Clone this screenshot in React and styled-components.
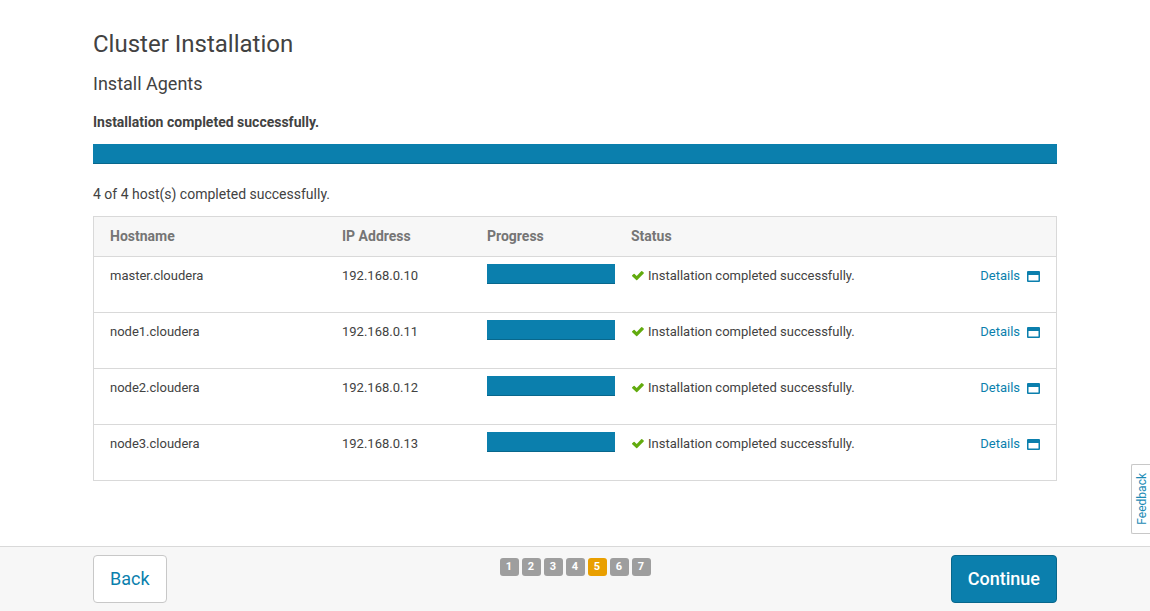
import React from "react";
import styled, { createGlobalStyle } from "styled-components";

const colors = {
  primary: "#0b7fad",
  primaryDark: "#08678c",
  text: "#424242",
  muted: "#757575",
  border: "#d9d9d9",
  panel: "#f7f7f7",
};

const GlobalStyle = createGlobalStyle`
  * { box-sizing: border-box; }
  body {
    margin: 0;
    background: #fff;
    color: ${colors.text};
    font: 14px/20px Roboto, "Liberation Sans", sans-serif;
  }
  button { font-family: inherit; cursor: pointer; }
`;

const Page = styled.div`
  display: flex;
  flex-direction: column;
  min-height: 100vh;
`;

const Main = styled.main`
  flex: 1;
  padding: 28px 93px 64px;
`;

const Title = styled.h1`
  margin: 0 0 12px;
  font-size: 24px;
  line-height: 32px;
  font-weight: 400;
`;

const Subtitle = styled.h2`
  margin: 0 0 16px;
  font-size: 18px;
  line-height: 24px;
  font-weight: 400;
`;

const Message = styled.p`
  margin: 0 0 12px;
  font-weight: ${(p) => (p.$strong ? 700 : 400)};
`;

const Bar = styled.div`
  height: 20px;
  width: 100%;
  background: ${colors.primary};
  box-shadow: inset 0 -1px 0 ${colors.primaryDark};
`;

const OverallBar = styled(Bar)`
  margin-bottom: 20px;
`;

const HostTable = styled.table`
  width: 100%;
  table-layout: fixed;
  border-spacing: 0;
  border: 1px solid ${colors.border};
  border-bottom: 0;
`;

const Col = styled.col`
  width: ${(p) => p.$width};
`;

const HeadCell = styled.th`
  height: 40px;
  padding: 0 0 2px 16px;
  text-align: left;
  font-weight: 700;
  color: ${colors.muted};
  background: ${colors.panel};
  border-bottom: 1px solid ${colors.border};
`;

const Cell = styled.td`
  height: 56px;
  padding: 7px 0 0 16px;
  vertical-align: top;
  font-size: 13px;
  line-height: 24px;
  border-bottom: 1px solid ${colors.border};
`;

const ActionCell = styled(Cell)`
  padding-right: 16px;
`;

const Status = styled.span`
  display: flex;
  align-items: center;
  gap: 4px;
`;

const DetailsLink = styled.a`
  display: flex;
  align-items: center;
  justify-content: flex-end;
  gap: 6px;
  color: ${colors.primary};
  text-decoration: none;
`;

const Footer = styled.footer`
  display: flex;
  align-items: flex-start;
  justify-content: space-between;
  padding: 8px 93px;
  background: ${colors.panel};
  border-top: 1px solid ${colors.border};
`;

const FooterSide = styled.div`
  flex: 1;
  display: flex;
  justify-content: ${(p) => (p.$end ? "flex-end" : "flex-start")};
`;

const Button = styled.button`
  height: 48px;
  padding: 0 16px;
  font-size: 18px;
  line-height: 24px;
  font-weight: ${(p) => (p.$primary ? 500 : 400)};
  color: ${(p) => (p.$primary ? "#fff" : colors.primary)};
  background: ${(p) => (p.$primary ? colors.primary : "#fff")};
  border: 1px solid ${(p) => (p.$primary ? colors.primaryDark : "#c8c8c8")};
  border-radius: 4px;
`;

const Steps = styled.ol`
  display: flex;
  gap: 3px;
  margin: 0;
  padding: 3px 0 0;
  list-style: none;
`;

const Step = styled.li`
  width: 19px;
  height: 18px;
  border-radius: 3px;
  text-align: center;
  font-size: 11px;
  line-height: 18px;
  font-weight: 700;
  color: #fff;
  background: ${(p) => (p.$active ? "#e99f00" : "#9e9e9e")};
`;

const Feedback = styled.button`
  position: fixed;
  right: 0;
  bottom: 77px;
  width: 19px;
  height: 70px;
  padding: 0 0 0 2px;
  display: flex;
  align-items: center;
  justify-content: center;
  writing-mode: vertical-rl;
  font-size: 12px;
  line-height: 16px;
  color: #1c8bb5;
  background: #fff;
  border: 1px solid #c8c8c8;
  border-right: 0;
  border-radius: 2px 0 0 2px;

  span { transform: rotate(180deg); }
`;

const CheckIcon = () => (
  <svg width="13" height="12" viewBox="0 0 13 12" aria-hidden="true">
    <path
      fill="#62ab0e"
      d="M1.2 5.3 2.6 3.9q.5-.4 1 0l2.1 2L10.2 1.2q.5-.4 1 0l1.5 1.4q.4.4 0 .9L6.2 10q-.5.5-1 0L1.2 6.2q-.4-.4 0-.9Z"
    />
  </svg>
);

const WindowIcon = () => (
  <svg width="14" height="12" viewBox="0 0 14 12" aria-hidden="true">
    <path
      fill={colors.primary}
      fillRule="evenodd"
      d="M2 1h11q1 0 1 1v9q0 1-1 1H2q-1 0-1-1V2q0-1 1-1ZM2.5 5v5.5h10V5Z"
    />
  </svg>
);

const hosts = [
  { name: "master.cloudera", ip: "192.168.0.10" },
  { name: "node1.cloudera", ip: "192.168.0.11" },
  { name: "node2.cloudera", ip: "192.168.0.12" },
  { name: "node3.cloudera", ip: "192.168.0.13" },
];

const steps = [1, 2, 3, 4, 5, 6, 7];

export default function App() {
  return (
    <Page>
      <GlobalStyle />
      <Main>
        <Title>Cluster Installation</Title>
        <Subtitle>Install Agents</Subtitle>
        <Message $strong>Installation completed successfully.</Message>
        <OverallBar role="progressbar" aria-label="Overall progress" aria-valuenow={100} />
        <Message>4 of 4 host(s) completed successfully.</Message>
        <HostTable>
          <colgroup>
            <Col $width="232px" />
            <Col $width="145px" />
            <Col $width="144px" />
            <Col $width="auto" />
            <Col $width="96px" />
          </colgroup>
          <thead>
            <tr>
              <HeadCell scope="col">Hostname</HeadCell>
              <HeadCell scope="col">IP Address</HeadCell>
              <HeadCell scope="col">Progress</HeadCell>
              <HeadCell scope="col" colSpan={2}>Status</HeadCell>
            </tr>
          </thead>
          <tbody>
            {hosts.map((host) => (
              <tr key={host.name}>
                <Cell>{host.name}</Cell>
                <Cell>{host.ip}</Cell>
                <Cell>
                  <Bar role="progressbar" aria-label={host.name} aria-valuenow={100} />
                </Cell>
                <Cell>
                  <Status>
                    <CheckIcon />
                    Installation completed successfully.
                  </Status>
                </Cell>
                <ActionCell>
                  <DetailsLink href="#details">
                    Details
                    <WindowIcon />
                  </DetailsLink>
                </ActionCell>
              </tr>
            ))}
          </tbody>
        </HostTable>
      </Main>
      <Footer>
        <FooterSide>
          <Button type="button">Back</Button>
        </FooterSide>
        <Steps>
          {steps.map((step) => (
            <Step key={step} $active={step === 5} aria-current={step === 5 ? "step" : undefined}>
              {step}
            </Step>
          ))}
        </Steps>
        <FooterSide $end>
          <Button type="button" $primary>Continue</Button>
        </FooterSide>
      </Footer>
      <Feedback type="button">
        <span>Feedback</span>
      </Feedback>
    </Page>
  );
}
